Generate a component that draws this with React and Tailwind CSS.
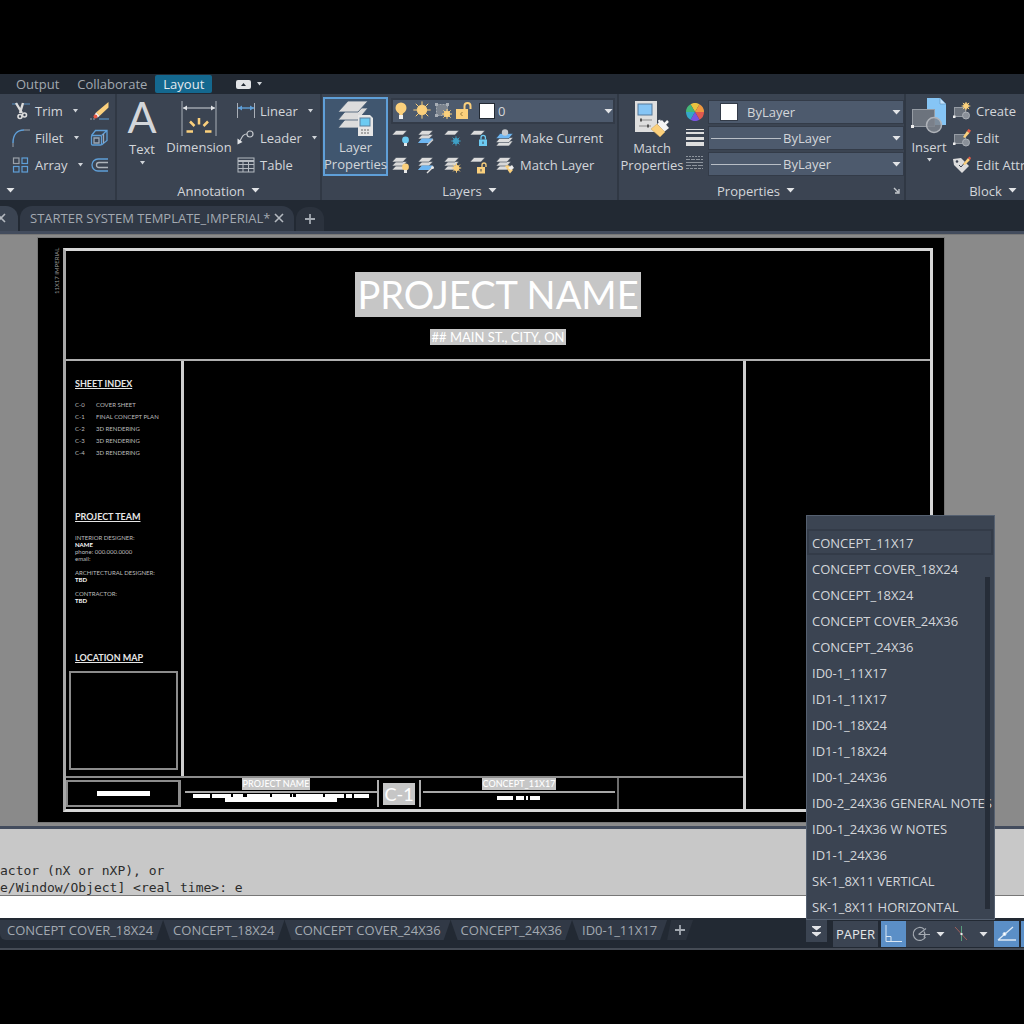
import { useState } from 'react';

const layoutTabs = ['CONCEPT COVER_18X24', 'CONCEPT_18X24', 'CONCEPT COVER_24X36', 'CONCEPT_24X36', 'ID0-1_11X17'];

const layoutMenu = [
  'CONCEPT_11X17',
  'CONCEPT COVER_18X24',
  'CONCEPT_18X24',
  'CONCEPT COVER_24X36',
  'CONCEPT_24X36',
  'ID0-1_11X17',
  'ID1-1_11X17',
  'ID0-1_18X24',
  'ID1-1_18X24',
  'ID0-1_24X36',
  'ID0-2_24X36 GENERAL NOTES',
  'ID0-1_24X36 W NOTES',
  'ID1-1_24X36',
  'SK-1_8X11 VERTICAL',
  'SK-1_8X11 HORIZONTAL',
];

const sheetIndex = [
  ['C-0', 'COVER SHEET'],
  ['C-1', 'FINAL CONCEPT PLAN'],
  ['C-2', '3D RENDERING'],
  ['C-3', '3D RENDERING'],
  ['C-4', '3D RENDERING'],
];

function Caret({ small }) {
  return small ? (
    <svg width="5" height="4" viewBox="0 0 5 4" className="shrink-0"><path d="M0 0h5L2.500 3.500z" fill="#d0d4d9" /></svg>
  ) : (
    <svg width="9" height="5" viewBox="0 0 9 5" className="shrink-0"><path d="M0.500 0h8L4.500 4.500z" fill="#e2e4e7" /></svg>
  );
}

/* ---------- ribbon icons ---------- */

function TrimIcon() {
  return (
    <svg width="18" height="18" viewBox="0 0 18 18" fill="none">
      <path d="M0 2h6M12 2h6" stroke="#5b8fc0" />
      <path d="M4 1l6 10M11 1L8 11" stroke="#dcdcdc" strokeWidth="2.400" />
      <circle cx="8" cy="14.500" r="2" stroke="#dcdcdc" strokeWidth="1.600" />
      <circle cx="12.500" cy="13" r="2" stroke="#dcdcdc" strokeWidth="1.600" />
    </svg>
  );
}

function FilletIcon() {
  return (
    <svg width="18" height="18" viewBox="0 0 18 18" fill="none">
      <path d="M1 18v-4" stroke="#9aa1aa" />
      <path d="M1 14C1 6 5 1 12 1" stroke="#5f9fd8" strokeWidth="1.500" />
      <path d="M12 1h6" stroke="#9aa1aa" />
    </svg>
  );
}

function ArrayIcon() {
  return (
    <svg width="18" height="18" viewBox="0 0 18 18" fill="none" strokeWidth="1.200">
      <rect x="1.500" y="2" width="5.500" height="5.500" stroke="#9aa1aa" />
      <rect x="10" y="2" width="5.500" height="5.500" stroke="#5f9fd8" />
      <rect x="1.500" y="10.500" width="5.500" height="5.500" stroke="#5f9fd8" />
      <rect x="10" y="10.500" width="5.500" height="5.500" stroke="#5f9fd8" />
    </svg>
  );
}

function EraseIcon() {
  return (
    <svg width="19" height="18" viewBox="0 0 19 18">
      <path d="M0 17h5" stroke="#9aa1aa" strokeDasharray="2 1" />
      <path d="M9 17h10" stroke="#5f9fd8" />
      <path d="M18.500 0v5.500L9.500 14 6 10.500z" fill="#fbd07c" />
      <path d="M6 10.500L9.500 14l-2 1.500L4.500 13z" fill="#fff" />
      <circle cx="5.500" cy="14.500" r="2" fill="#e85a45" />
    </svg>
  );
}

function ExplodeIcon() {
  return (
    <svg width="19" height="18" viewBox="0 0 19 18" fill="none" strokeWidth="1.300">
      <rect x="1.500" y="6.500" width="10" height="9.500" rx="1" stroke="#5f9fd8" />
      <path d="M1.500 6.500l4-5H17v10l-5.500 4.500M11.500 6.500l5.500-5" stroke="#5f9fd8" />
      <path d="M4 9h5v5H4z" stroke="#9aa8b8" />
      <path d="M13.500 5v9" stroke="#9aa8b8" />
    </svg>
  );
}

function OffsetIcon() {
  return (
    <svg width="19" height="18" viewBox="0 0 19 18" fill="none">
      <path d="M18 3H8a6 6 0 000 12h10" stroke="#5f9fd8" strokeWidth="1.300" />
      <path d="M18 6.500H9a2.500 2.500 0 000 5h9" stroke="#aeb4bb" strokeWidth="1.300" />
    </svg>
  );
}

function DimensionIcon() {
  return (
    <svg width="36" height="36" viewBox="0 0 36 36" fill="none">
      <path d="M1 0v35M35 0v35" stroke="#a9afb7" />
      <path d="M2 7h32" stroke="#d0d4d9" />
      <path d="M2 7l4-2.500v5zM34 7l-4-2.500v5z" fill="#e2e4e7" />
      <g stroke="#fbd07c" strokeWidth="2.500">
        <path d="M18 17v6.500M9 20.500l4.500 4.500M27 20.500L22.500 25M5.500 30.500h6.500M24 30.500h6.500" />
      </g>
    </svg>
  );
}

function LinearIcon() {
  return (
    <svg width="18" height="16" viewBox="0 0 18 16" fill="none">
      <path d="M0.500 0v15M17.500 0v15" stroke="#a9afb7" />
      <path d="M1 5h16" stroke="#5f9fd8" strokeWidth="1.400" />
      <path d="M1 5l4-2.500v5zM17 5l-4-2.500v5z" fill="#5f9fd8" />
    </svg>
  );
}

function LeaderIcon() {
  return (
    <svg width="18" height="16" viewBox="0 0 18 16" fill="none">
      <circle cx="13" cy="4" r="3" stroke="#c3c7cc" strokeWidth="1.200" />
      <path d="M10 4C6 4 5 7 3 11" stroke="#c3c7cc" strokeWidth="1.200" />
      <path d="M0.500 14.500v-6l5 3.500z" fill="#e2e4e7" />
    </svg>
  );
}

function TableIcon() {
  return (
    <svg width="18" height="16" viewBox="0 0 18 16" fill="none" stroke="#b4b9c0">
      <rect x="1" y="1" width="16" height="14" />
      <path d="M1 4h16" strokeWidth="2" />
      <path d="M1 7.500h16M1 11.500h16M6 4v11M11.500 4v11" />
    </svg>
  );
}

function Sheets({ mid = '#d8d8d8', top = '#dcdcdc', rows = 3 }) {
  return (
    <g stroke="#3b4452" strokeWidth="0.600">
      {rows > 2 && <path d="M4 9.500h11L11 14H0z" fill="#dcdcdc" />}
      {rows > 1 && <path d="M4 5.500h11L11 10H0z" fill={mid} />}
      <path d="M4 1.500h11L11 6H0z" fill={top} />
    </g>
  );
}

function Bulb({ x, y, color }) {
  return (
    <g>
      <circle cx={x} cy={y} r="3.400" fill={color} />
      <rect x={x - 1.5} y={y + 3} width="3" height="3" fill="#e8e8e8" />
    </g>
  );
}

function Sun({ x, y, r, color }) {
  const d = r * 1.8;
  const e = r * 1.3;
  return (
    <g stroke={color} strokeWidth="1">
      <path d={`M${x - d} ${y}h${2 * d}M${x} ${y - d}v${2 * d}M${x - e} ${y - e}l${2 * e} ${2 * e}M${x - e} ${y + e}l${2 * e} ${-2 * e}`} />
      <circle cx={x} cy={y} r={r} fill={color} />
    </g>
  );
}

function Lock({ x, y, color, open }) {
  return (
    <g>
      <path
        d={open ? `M${x + 5} ${y}v-2a2 2 0 014 0v2` : `M${x + 2} ${y}v-2a2.200 2.200 0 014.400 0v2`}
        fill="none" stroke={color} strokeWidth="1.300"
      />
      <rect x={x} y={y} width="8" height="6.500" fill={color} />
      <path d={`M${x + 4} ${y + 2}v2.500`} stroke="#3b4452" />
    </g>
  );
}

function LayerIcon({ type }) {
  return (
    <svg width="18" height="18" viewBox="0 0 18 18">
      {type === 'off' && <><Sheets rows={1} /><Bulb x={13.500} y={11} color="#6ccbf2" /></>}
      {type === 'isolate' && <><Sheets /><path d="M4 9.500h11L11 14H0z" fill="#6db6f2" /><path d="M9 16.500l6-6" stroke="#d0d0d0" strokeWidth="1.500" /></>}
      {type === 'freeze' && <><Sheets rows={1} /><Sun x={12} y={12} r={2.6} color="#3f9fc4" /></>}
      {type === 'lock' && <><Sheets rows={1} /><Lock x={9} y={10.500} color="#6ccbf2" /></>}
      {type === 'current' && (
        <>
          <g stroke="#3b4452" strokeWidth="0.600">
            <path d="M4 12h13l-4 5H0z" fill="#dcdcdc" />
            <path d="M4 8.500h13l-4 5H0z" fill="#dcdcdc" />
            <path d="M4 4.500h13l-4 5H0z" fill="#6db6f2" />
          </g>
          <circle cx="9" cy="3.500" r="3.200" fill="#c6c9cd" />
        </>
      )}
      {type === 'on' && <><Sheets /><Bulb x={13.500} y={11} color="#fbd07c" /></>}
      {type === 'unisolate' && <><Sheets /><path d="M4 9.500h11L11 14H0z" fill="#6db6f2" /><path d="M9 17l6-6" stroke="#e0e0e0" strokeWidth="1.500" /><circle cx="14.500" cy="11.500" r="1.500" fill="#e8e8e8" /></>}
      {type === 'thaw' && <><Sheets /><Sun x={12.500} y={12} r={2.6} color="#fbd07c" /></>}
      {type === 'unlock' && <><Sheets rows={1} /><Lock x={7} y={11} color="#fbd07c" open /></>}
      {type === 'match' && <><Sheets /><path d="M9 10l3-1 5 5-3 3.500z" fill="#fbd07c" /><path d="M12 12l4-3 2 3-3 2z" fill="#eee" /></>}
    </svg>
  );
}

function LayerPropertiesIcon() {
  return (
    <svg width="36" height="38" viewBox="0 0 36 38" className="shrink-0">
      <g fill="#dcdcdc" stroke="#40566f" strokeWidth="0.800">
        <path d="M10 16h20L20 28H0z" />
        <path d="M10 8h20L20 20H0z" />
        <path d="M10 1h20L20 12H0z" />
      </g>
      <path d="M20 15h12l3 3v18H20z" fill="#e6e6e6" />
      <rect x="22" y="18" width="10" height="8" fill="#6ccbf2" stroke="#5a7f9c" />
      <path d="M23 30h9M23 33h9" stroke="#666" strokeDasharray="2 1" />
    </svg>
  );
}

function LayerStateIcons() {
  return (
    <svg width="78" height="20" viewBox="0 0 78 20" className="shrink-0">
      <circle cx="7" cy="7" r="5.500" fill="#fbd07c" />
      <path d="M4.500 11h5l-1 3h-3z" fill="#fbd07c" />
      <rect x="5" y="14" width="4" height="4" fill="#f0f0f0" />
      <Sun x={28} y={9} r={4.8} color="#fbd07c" />
      <rect x="42.500" y="3.500" width="11" height="11" fill="#7a828d" stroke="#a0a6ae" strokeDasharray="2 1" />
      <path d="M41 2h3v3h-3zM52 2h3v3h-3zM41 13h3v3h-3z" fill="#a7adb5" />
      <Sun x={53} y={13} r={2.8} color="#fbd07c" />
      <path d="M70.500 8V5a3 3 0 016 0v3" fill="none" stroke="#fbd07c" strokeWidth="2" />
      <rect x="62" y="8" width="12" height="10" fill="#fbd07c" />
      <path d="M68.500 11l-2 2 2 2" fill="none" stroke="#9a7b3c" />
    </svg>
  );
}

function MatchPropertiesIcon() {
  return (
    <svg width="36" height="36" viewBox="0 0 36 36" className="shrink-0">
      <rect x="1" y="0" width="22" height="31" fill="#dedede" />
      <rect x="4" y="3" width="14" height="11" fill="#86c5f5" stroke="#55799a" />
      <path d="M6 19h12M5 25h12" stroke="#8a8a8a" />
      <path d="M7 17.500v3M14 23.500v3" stroke="#555" strokeWidth="2" />
      <path d="M23 23l5-4 7 8-5 4z" fill="#f4f4f4" />
      <path d="M27 24l-2-5M29 25l5-5" stroke="#f4f4f4" strokeWidth="2.500" />
      <path d="M17 28l6-5 8 8-5 5z" fill="#fbd07c" stroke="#c9a15a" strokeWidth="0.500" />
    </svg>
  );
}

function ColorWheelIcon() {
  return (
    <svg width="18" height="18" viewBox="-9 -9 18 18">
      <path d="M0 0L-4.500-7.800A9 9 0 014.500-7.800z" fill="#e9c23f" />
      <path d="M0 0L4.500-7.800A9 9 0 019 0z" fill="#f0983f" />
      <path d="M0 0H9A9 9 0 014.500 7.800z" fill="#e05a4f" />
      <path d="M0 0L4.500 7.800A9 9 0 01-4.500 7.800z" fill="#7a55e0" />
      <path d="M0 0L-4.500 7.800A9 9 0 01-9 0z" fill="#35a8c9" />
      <path d="M0 0H-9A9 9 0 01-4.500-7.800z" fill="#45b878" />
    </svg>
  );
}

function LineweightIcon() {
  return (
    <svg width="18" height="18" viewBox="0 0 18 18" fill="#dedede">
      <rect y="0" width="18" height="1" /><rect y="3" width="18" height="2" /><rect y="8" width="18" height="3" /><rect y="13" width="18" height="4" />
    </svg>
  );
}

function LinetypeIcon() {
  return (
    <svg width="18" height="18" viewBox="0 0 18 18" stroke="#8d949d">
      <path d="M0 2.500h17" strokeDasharray="2 1" /><path d="M0 5.500h17" strokeDasharray="4 1" />
      <path d="M0 8.500h17" /><path d="M0 11.500h17" strokeDasharray="5 1" /><path d="M0 14.500h17" strokeDasharray="3 1" />
    </svg>
  );
}

function InsertIcon() {
  return (
    <svg width="36" height="36" viewBox="0 0 36 36">
      <path d="M16 0h13l6 6v21H16z" fill="#86c5f5" />
      <path d="M29 0v6h6z" fill="#c4e2fa" stroke="#5d8db5" strokeWidth="0.600" />
      <rect x="1.500" y="11.500" width="22" height="17" fill="#6c737d" stroke="#969ca4" />
      <circle cx="23" cy="27" r="7.500" fill="#7c838c" fillOpacity="0.850" stroke="#b0b4ba" strokeWidth="1.500" />
      <rect x="0" y="27" width="3" height="3" fill="#eee" />
    </svg>
  );
}

function BlockIcon({ type }) {
  if (type === 'attr') {
    return (
      <svg width="18" height="18" viewBox="0 0 18 18">
        <path d="M0 3l8-1 8 8-7 7L1 9z" fill="#dcdcdc" />
        <circle cx="4" cy="5.500" r="1.300" fill="#3b4452" />
        <path d="M6 9l2 2 7-8" stroke="#3b4452" fill="none" />
        <path d="M10 8l5-6 2 2-5 5z" fill="#fbd07c" /><path d="M15 2l1.500-1.500L18 2l-1 2z" fill="#e85a45" />
      </svg>
    );
  }
  return (
    <svg width="18" height="18" viewBox="0 0 18 18">
      <rect x="1.500" y="5.500" width="11" height="9" fill="#6c737d" stroke="#969ca4" />
      <circle cx="13" cy="13.500" r="3.500" fill="#8a9099" stroke="#aaafb6" />
      <rect x="0" y="13.500" width="2.500" height="2.500" fill="#eee" />
      {type === 'create' ? (
        <Sun x={13} y={4} r={2.4} color="#fbd07c" />
      ) : (
        <><path d="M10 8l4-6 2.500 2-4.500 5z" fill="#fbd07c" /><path d="M14 2l1.500-2L18 1.500 16.500 4z" fill="#e85a45" /></>
      )}
    </svg>
  );
}

/* ---------- ribbon ---------- */

function Panel({ title, className, launcher, children }) {
  return (
    <section className={`flex flex-col shrink-0 h-full border-r-2 border-[#303844] bg-[#3b4452] pt-[3px] ${className}`}>
      <div className="flex h-[84px]">{children}</div>
      <div className="flex items-center h-[19px]">
        <button type="button" className="flex flex-1 items-center justify-center gap-1.5">
          {title} <Caret />
        </button>
        {launcher && (
          <svg width="7" height="7" viewBox="0 0 7 7" className="mr-1" fill="none" stroke="#c3c7cc">
            <path d="M1 1l4 4M6 2v4H2" strokeWidth="1.400" />
          </svg>
        )}
      </div>
    </section>
  );
}

function Tool({ icon, label, caret }) {
  return (
    <button type="button" className="flex items-center h-[27px] whitespace-nowrap">
      <span className="w-[23px]">{icon}</span>
      {label}
      {caret && <span className="ml-2.5"><Caret small /></span>}
    </button>
  );
}

function PropertySelect({ label, line, swatch }) {
  return (
    <div className="flex items-center h-6 bg-[#4d5a6d] border border-[#333b48] pr-0.5">
      {swatch && <span className="ml-3 mr-2.5 size-4 shrink-0 bg-white outline outline-[#333b48]"></span>}
      {line && <span className="ml-0.5 mr-0.5 h-px w-[70px] shrink-0 bg-[#b8bec6]"></span>}
      <select aria-label={label} className="appearance-none bg-transparent outline-none flex-1 min-w-0">
        <option>ByLayer</option>
      </select>
      <Caret />
    </div>
  );
}

function Ribbon() {
  return (
    <div className="flex h-[106px] overflow-hidden text-[#d3d6da]">
      <section className="flex flex-col shrink-0 w-[117px] border-r-2 border-[#303844] bg-[#3b4452] pt-[3px]">
        <div className="flex h-[84px] pl-3">
          <div className="w-[78px]">
            <Tool icon={<TrimIcon />} label="Trim" caret />
            <Tool icon={<FilletIcon />} label="Fillet" caret />
            <Tool icon={<ArrayIcon />} label="Array" caret />
          </div>
          <div>
            <button type="button" aria-label="Erase" className="flex items-center h-[27px]"><EraseIcon /></button>
            <button type="button" aria-label="Explode" className="flex items-center h-[27px]"><ExplodeIcon /></button>
            <button type="button" aria-label="Offset" className="flex items-center h-[27px]"><OffsetIcon /></button>
          </div>
        </div>
        <button type="button" aria-label="Modify" className="flex items-center h-[19px] pl-1.5"><Caret /></button>
      </section>

      <Panel title="Annotation" className="w-[205px]">
        <button type="button" className="flex flex-col items-center w-[50px]">
          <span aria-hidden="true" className="h-[42px] font-[Lato] text-[43px] leading-10">A</span>
          <span className="h-[22px] leading-5">Text</span>
          <Caret small />
        </button>
        <button type="button" className="flex flex-col items-center w-16 pt-1">
          <DimensionIcon />
          <span className="h-5 leading-5">Dimension</span>
        </button>
        <div className="pl-1.5">
          <Tool icon={<LinearIcon />} label="Linear" caret />
          <Tool icon={<LeaderIcon />} label="Leader" caret />
          <Tool icon={<TableIcon />} label="Table" />
        </div>
      </Panel>

      <Panel title="Layers" className="w-[297px]">
        <button type="button" className="flex flex-col items-center w-[65px] h-[79px] mx-px pt-px border-2 border-[#5f9fd8] bg-[#40566f] leading-[17px]">
          <LayerPropertiesIcon />
          <span className="pt-px">Layer<br />Properties</span>
        </button>
        <div className="flex-1 px-0.5 pt-px">
          <div className="flex items-center h-[26px] bg-[#4d5a6d] border-2 border-[#333b48] pl-px">
            <LayerStateIcons />
            <span className="ml-2 mr-1 size-3.5 shrink-0 bg-white outline outline-[#222933]"></span>
            <select aria-label="Layer" className="appearance-none bg-transparent outline-none flex-1 min-w-0">
              <option>0</option>
            </select>
            <Caret />
          </div>
          <div className="flex items-center h-[27px] gap-2 pl-px">
            {['off', 'isolate', 'freeze', 'lock'].map(t => (
              <button key={t} type="button" aria-label={t}><LayerIcon type={t} /></button>
            ))}
            <button type="button" className="flex items-center gap-1.5 whitespace-nowrap"><LayerIcon type="current" />Make Current</button>
          </div>
          <div className="flex items-center h-[27px] gap-2 pl-px">
            {['on', 'unisolate', 'thaw', 'unlock'].map(t => (
              <button key={t} type="button" aria-label={t}><LayerIcon type={t} /></button>
            ))}
            <button type="button" className="flex items-center gap-1.5 whitespace-nowrap"><LayerIcon type="match" />Match Layer</button>
          </div>
        </div>
      </Panel>

      <Panel title="Properties" className="w-[287px]" launcher>
        <button type="button" className="flex flex-col items-center w-[66px] pt-1 leading-[17px]">
          <MatchPropertiesIcon />
          <span className="pt-[3px]">Match<br />Properties</span>
        </button>
        <div className="flex flex-col justify-between w-[23px] h-[76px] pl-px pt-1.5 pb-px">
          <ColorWheelIcon />
          <LineweightIcon />
          <LinetypeIcon />
        </div>
        <div className="flex flex-1 flex-col gap-0.5 pt-[3px]">
          <PropertySelect label="Object color" swatch />
          <PropertySelect label="Lineweight" line />
          <PropertySelect label="Linetype" line />
        </div>
      </Panel>

      <Panel title="Block" className="w-[176px]">
        <button type="button" className="flex flex-col items-center w-[46px] pt-px">
          <InsertIcon />
          <span className="h-6 leading-[26px]">Insert</span>
          <Caret small />
        </button>
        <div className="pl-px">
          <Tool icon={<BlockIcon type="create" />} label="Create" />
          <Tool icon={<BlockIcon type="edit" />} label="Edit" />
          <Tool icon={<BlockIcon type="attr" />} label="Edit Attributes" />
        </div>
      </Panel>
      <div className="flex-1 bg-[#3b4452]"></div>
    </div>
  );
}

function RibbonTabs() {
  return (
    <nav className="flex items-center h-5 text-[#a3a9b1]">
      <button type="button" className="pl-4 pr-2">Output</button>
      <button type="button" className="pl-2.5 pr-2">Collaborate</button>
      <button type="button" className="h-[18px] px-2 leading-[18px] bg-[#14688f] text-[#e4eaf0] rounded-xs">Layout</button>
      <button type="button" aria-label="Ribbon display" className="flex items-center gap-1.5 ml-6">
        <svg width="15" height="9" viewBox="0 0 15 9"><rect width="15" height="9" rx="2" fill="#e2e4e7" /><path d="M5 6l2.500-3L10 6z" fill="#222933" /></svg>
        <Caret small />
      </button>
    </nav>
  );
}

function FileTabs() {
  return (
    <div className="flex items-end h-[31px] text-[#a3a9b1]">
      <button type="button" aria-label="Close" className="flex items-center justify-end h-[25px] w-[18px] pr-3 pb-0.5 rounded-tr-xl bg-[#3b4452]"><CloseX /></button>
      <div className="flex items-center h-[25px] ml-0.5 px-2.5 pb-0.5 gap-1 rounded-t-xl bg-[#313946]">
        <button type="button">STARTER SYSTEM TEMPLATE_IMPERIAL*</button>
        <button type="button" aria-label="Close drawing"><CloseX /></button>
      </div>
      <button type="button" aria-label="New drawing" className="flex items-center justify-center h-6 w-7 ml-0.5 rounded-t-xl bg-[#2b323d]"><Plus /></button>
    </div>
  );
}

function CloseX() {
  return <svg width="10" height="10" viewBox="0 0 10 10" className="shrink-0"><path d="M1 1l8 8M9 1L1 9" stroke="#b4b9c0" strokeWidth="1.600" /></svg>;
}

function Plus() {
  return <svg width="10" height="10" viewBox="0 0 10 10"><path d="M5 0v10M0 5h10" stroke="#a3a9b1" strokeWidth="1.800" /></svg>;
}

/* ---------- paper sheet ---------- */

function SheetSide() {
  return (
    <aside className="flex flex-col border-r-[3px] border-[#cfcfcf] text-[6px] leading-[7px] text-[#bdbdbd]">
      <div className="h-[133px] pl-[9px] pt-[17px]">
        <h2 className="text-[9px] leading-3 font-bold underline text-[#e6e6e6]">SHEET INDEX</h2>
        <ul className="pt-2">
          {sheetIndex.map(([num, name]) => (
            <li key={num} className="flex h-3 items-center"><span className="w-[21px]">{num}</span>{name}</li>
          ))}
        </ul>
      </div>
      <div className="h-[140px] pl-[9px] pt-[17px]">
        <h2 className="text-[9px] leading-3 font-bold underline text-[#e6e6e6]">PROJECT TEAM</h2>
        <p className="pt-[11px]">INTERIOR DESIGNER:</p>
        <p className="font-bold text-white">NAME</p>
        <p>phone: 000.000.0000</p>
        <p>email:</p>
        <p className="pt-[7px]">ARCHITECTURAL DESIGNER:</p>
        <p className="font-bold text-white">TBD</p>
        <p className="pt-[7px]">CONTRACTOR:</p>
        <p className="font-bold text-white">TBD</p>
      </div>
      <div className="flex flex-1 flex-col px-[3px] pb-1.5 pt-[18px]">
        <h2 className="pl-1.5 text-[9px] leading-3 font-bold underline text-[#e6e6e6]">LOCATION MAP</h2>
        <div className="mt-[7px] flex-1 border-2 border-[#8c8c8c]"></div>
      </div>
    </aside>
  );
}

function TitleStrip() {
  return (
    <div className="flex h-[33px] border-t-2 border-[#8c8c8c] text-[9px] leading-3 text-white">
      <div className="flex items-center justify-center w-[115px] my-0.5 border-2 border-r-[3px] border-[#8c8c8c]">
        <span className="h-[5px] w-[53px] bg-white"></span>
      </div>
      <div className="flex flex-1 flex-col items-center pl-1">
        <span className="mr-2.5 bg-[#c6c6c6] px-px font-medium">PROJECT NAME</span>
        <span className="mt-px h-0.5 w-full shrink-0 bg-[#a8a8a8]"></span>
        <svg width="176" height="10" viewBox="0 0 176 10" fill="#fff">
          <path d="M0 1h17v4H0zM19 1h19v4H19zM40 1h10v4H40zM54 1h23v4H54zM79 1h18v4H79zM99 1h1v4H99zM103 1h27v4H103zM132 1h19v4H132zM153 1h6v4H153zM161 1h15v4H161zM32 4h112v5H32z" />
        </svg>
      </div>
      <div className="flex items-center justify-center w-11 my-0.5 border-x-2 border-[#b0b0b0]">
        <span className="bg-[#c6c6c6] w-8 text-center text-lg leading-[22px]">C-1</span>
      </div>
      <div className="flex flex-1 flex-col items-center px-0.5">
        <span className="bg-[#c6c6c6] px-px font-medium">CONCEPT_11X17</span>
        <span className="mt-px h-0.5 w-full shrink-0 bg-[#a8a8a8]"></span>
        <svg width="44" height="10" viewBox="0 0 44 10" fill="#fff">
          <path d="M0 3h16v4H0zM19 3h8v4H19zM29 3h2v4H29zM33 3h10v4H33z" />
        </svg>
      </div>
      <div className="w-[126px] border-l-2 border-[#6c6c6c]"></div>
    </div>
  );
}

function Paper() {
  return (
    <main className="h-[591px] bg-[#8a8a8a] pt-0.5 pl-[37px] pr-[79px]">
      <div className="flex h-[586px] bg-black border border-[#777] font-[Lato]">
        <div className="flex justify-end w-[25px] pt-3 pr-[3px]">
          <span className="h-11 text-[6px] leading-[7px] text-[#9a9a9a] rotate-180 whitespace-nowrap [writing-mode:vertical-rl]">11X17 IMPERIAL</span>
        </div>
        <div className="flex flex-1 flex-col mt-2.5 mb-2.5 mr-[11px] border-[3px] border-[#d6d6d6] border-l-[#a8a8a8]">
          <header className="flex flex-col items-center h-[110px] border-b-2 border-[#b0b0b0] pt-[21px] text-white">
            <h1 className="bg-[#c6c6c6] px-0.5 text-[38px] leading-[45px]">PROJECT NAME</h1>
            <p className="mt-3 bg-[#c6c6c6] px-px text-[13px] leading-4">## MAIN ST., CITY, ON</p>
          </header>
          <div className="flex flex-1">
            <div className="flex flex-1 flex-col border-r-[3px] border-[#cfcfcf]">
              <div className="grid flex-1 grid-cols-[118px_1fr]">
                <SheetSide />
                <div></div>
              </div>
              <TitleStrip />
            </div>
            <div className="w-[184px]"></div>
          </div>
        </div>
      </div>
    </main>
  );
}

/* ---------- command line and status bar ---------- */

function CommandLine() {
  return (
    <div className="border-t-[3px] border-[#434c5d] font-['DejaVu_Sans_Mono',monospace] text-[13px] leading-[17px] text-[#2c2c2c]">
      <div className="h-[67px] pt-[33px] bg-[#c8c8c8] border-b border-[#777] whitespace-pre">
        <p>actor (nX or nXP), or</p>
        <p>e/Window/Object] &lt;real time&gt;: e</p>
      </div>
      <input type="text" aria-label="Command" className="block w-full h-[22px] bg-white outline-none" />
    </div>
  );
}

function LayoutMenu() {
  return (
    <ul className="absolute bottom-full left-0 w-[189px] border border-[#556070] bg-[#3b4452] pt-[13px] text-[#d3d6da]">
      {layoutMenu.map((name, i) => (
        <li key={name}>
          <button
            type="button"
            className={`block w-[186px] h-[26px] text-left whitespace-nowrap overflow-hidden ${i === 0 ? 'border-2 border-[#333b48] pl-[3px] leading-6' : 'pl-[5px] leading-7'}`}
          >
            {name}
          </button>
        </li>
      ))}
      <li aria-hidden="true" className="absolute right-1 top-[61px] bottom-2.5 w-[5px] bg-[#262d38]"></li>
    </ul>
  );
}

function StatusBar() {
  const [open, setOpen] = useState(true);

  return (
    <footer className="flex h-8 pt-0.5 bg-[#222933] border-b-2 border-[#454b55] text-[#a3a9b1]">
      <div className="flex flex-1 min-w-0 overflow-hidden">
        {layoutTabs.map((name, i) => (
          <button
            key={name}
            type="button"
            className={`h-5 shrink-0 pr-2.5 bg-[#313946] rounded-b-md ${i === 0 ? 'pl-[7px] [clip-path:polygon(0_0,100%_0,calc(100%-7px)_100%,0_100%)]' : 'pl-2.5 [clip-path:polygon(0_0,100%_0,calc(100%-7px)_100%,7px_100%)]'}`}
          >
            {name}
          </button>
        ))}
        <button type="button" aria-label="New layout" className="flex items-center justify-center h-5 w-[26px] bg-[#2b323d] [clip-path:polygon(4px_0,100%_0,calc(100%-7px)_100%,0_100%)]"><Plus /></button>
      </div>
      <div className="relative shrink-0">
        <button type="button" aria-label="Layout list" onClick={() => setOpen(!open)} className="flex justify-center items-center w-[21px] h-[22px] bg-[#3b4452]">
          <svg width="9" height="11" viewBox="0 0 9 11" fill="#e2e4e7"><path d="M0 0h9v1L4.500 4.500 0 1zM0 6h9v1L4.500 10.500 0 7z" /></svg>
        </button>
        {open && <LayoutMenu />}
      </div>
      <div className="flex shrink-0 items-center w-[197px] pl-1.5 overflow-hidden">
        <button type="button" className="h-[26px] w-[45px] shrink-0 bg-[#3b4452] text-[#e4e6e9]">PAPER</button>
        <button type="button" aria-label="Ortho" className="ml-[3px] h-[26px] w-[25px] shrink-0 bg-[#5b8fc7]">
          <svg width="25" height="26" viewBox="0 0 25 26" fill="none" stroke="#dbe8f5"><path d="M5 4v16.500h16M5 15.500h5v5" /></svg>
        </button>
        <button type="button" aria-label="Polar tracking" className="flex shrink-0 items-center gap-1.5 h-[26px] px-1.5 bg-[#3b4452]">
          <svg width="18" height="18" viewBox="0 0 18 18" fill="none" stroke="#a3a9b1" strokeWidth="1.200"><path d="M12 4a6.500 6.500 0 101.500 8M6.500 9.500H18M6.500 9.500L14 3.500M12 6.500q2 3 0 6" /></svg>
          <Caret />
        </button>
        <button type="button" aria-label="Isometric drafting" className="flex shrink-0 items-center gap-2 h-[26px] pl-0.5 pr-1.5 bg-[#3b4452]">
          <svg width="18" height="18" viewBox="0 0 18 18" fill="none"><path d="M2 2l12 13" stroke="#a0605c" /><path d="M8.500 1v15" stroke="#5a9c7c" /><path d="M7.500 9h2" stroke="#eee" strokeWidth="2" /></svg>
          <Caret />
        </button>
        <button type="button" aria-label="Object snap tracking" className="h-[26px] w-[25px] shrink-0 bg-[#5b8fc7]">
          <svg width="25" height="26" viewBox="0 0 25 26" fill="none" stroke="#dbe8f5"><path d="M4 19h18M4 19L19 6" strokeWidth="1.300" /><circle cx="10.500" cy="13" r="1.500" fill="#fff" /></svg>
        </button>
        <button type="button" aria-label="Object snap" className="ml-0.5 h-[26px] w-[25px] shrink-0 bg-[#5b8fc7]"></button>
      </div>
    </footer>
  );
}

export default function App() {
  return (
    <div className="min-h-screen bg-black py-[74px]">
      <div className="w-full overflow-x-clip bg-[#222933] font-['Open_Sans',sans-serif] text-[13px] leading-5">
        <RibbonTabs />
        <Ribbon />
        <FileTabs />
        <div className="h-1 border-b border-[#777] bg-[#434c5d]"></div>
        <Paper />
        <CommandLine />
        <StatusBar />
      </div>
    </div>
  );
}
